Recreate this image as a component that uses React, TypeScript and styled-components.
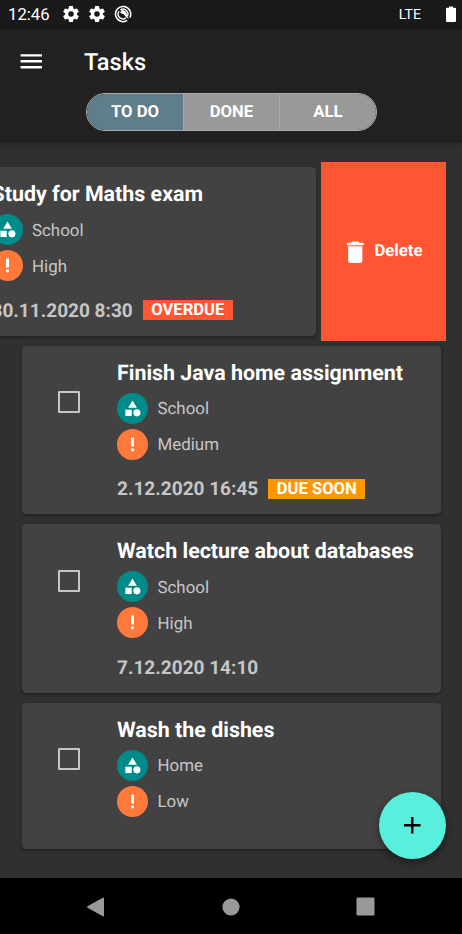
import React from 'react';
import styled, { createGlobalStyle } from 'styled-components';

const GlobalStyle = createGlobalStyle`
  * { box-sizing: border-box; }
  body { margin: 0; background: #000; overflow: hidden; text-rendering: geometricPrecision; }
  button { border: 0; padding: 0; margin: 0; background: none; font: inherit; color: inherit; text-rendering: inherit; }
`;

const Screen = styled.div`
  width: 462px;
  height: 934px;
  display: flex;
  flex-direction: column;
  background: #303030;
  color: #fff;
  font-family: Roboto, 'Liberation Sans', sans-serif;
  overflow: hidden;
  position: relative;
  white-space: nowrap;
`;

const StatusBar = styled.div`
  height: 28.5px;
  flex: none;
  background: #191919;
  display: flex;
  align-items: center;
  padding: 0 6px 0 8px;
`;

const Clock = styled.span`
  width: 54px;
  font-size: 16.7px;
  line-height: 20px;
  padding-top: 3px;
`;

const StatusIcons = styled.div`
  display: flex;
  gap: 8px;
  flex: 1;
`;

const Network = styled.span`
  font-size: 14.2px;
  margin-right: 25px;
  padding-top: 2px;
`;

const AppBar = styled.header`
  height: 114.5px;
  flex: none;
  background: #212121;
  display: flex;
  flex-direction: column;
  box-shadow: 0 2px 5px rgba(0, 0, 0, 0.22);
  position: relative;
`;

const TitleRow = styled.div`
  height: 64.5px;
  display: flex;
  align-items: center;
  padding-left: 17px;
`;

const MenuButton = styled.button`
  width: 67px;
  height: 29px;
`;

const Title = styled.h1`
  margin: 0;
  padding-top: 2px;
  font-size: 23.6px;
  line-height: 28px;
  font-weight: 500;
`;

const Segments = styled.div`
  align-self: center;
  width: 290.5px;
  height: 38px;
  margin-left: 1px;
  display: flex;
  border: 1px solid #a9a9a9;
  border-radius: 19px;
  overflow: hidden;
`;

const Segment = styled.button<{ $active?: boolean }>`
  flex: 1;
  padding-top: 1px;
  background: ${(p) => (p.$active ? '#607d8b' : '#999')};
  font-size: 16.7px;
  font-weight: 700;
  & + & { border-left: 1px solid #a9a9a9; }
`;

const List = styled.main`
  flex: 1;
  min-height: 0;
  padding: 19px 16px 0 17px;
`;

const Row = styled.div<{ $short?: boolean }>`
  height: ${(p) => (p.$short ? 156.5 : 178.5)}px;
  display: flex;
  padding: 5px 0 5px 5px;
`;

const SwipedRow = styled(Row)`
  margin-left: -125.5px;
  padding: 0;
  justify-content: space-between;
`;

const Card = styled.article`
  width: 419px;
  height: 100%;
  flex: none;
  background: #424242;
  border-radius: 4.5px;
  box-shadow: 0 2px 2px rgba(0, 0, 0, 0.2), 0 1px 4px rgba(0, 0, 0, 0.16);
  display: flex;
`;

const SwipedCard = styled.div`
  padding: 5px 0 5px 5px;
`;

const CheckColumn = styled.div`
  width: 95px;
  flex: none;
  padding: 45.5px 0 0 36px;
`;

const Checkbox = styled.div`
  width: 22px;
  height: 22px;
  border: 2px solid #c6c6c6;
  border-radius: 1px;
`;

const Details = styled.div`
  padding-top: 14px;
  min-width: 0;
`;

const TaskName = styled.h2`
  margin: 0 0 3px;
  font-size: 21.4px;
  line-height: 28px;
  font-weight: 700;
`;

const Meta = styled.div`
  height: 35.7px;
  display: flex;
  align-items: center;
  gap: 9.5px;
  font-size: 16.9px;
  color: #c6c6c6;
`;

const MetaLabel = styled.span`
  padding-top: 2px;
`;

const Badge = styled.span<{ $color: string }>`
  width: 31px;
  height: 31px;
  border-radius: 50%;
  background: ${(p) => p.$color};
  display: flex;
  align-items: center;
  justify-content: center;
`;

const DueRow = styled.div`
  height: 24px;
  margin-top: 15px;
  display: flex;
  align-items: center;
  gap: 10px;
  font-size: 19.05px;
  font-weight: 700;
  color: #c6c6c6;
`;

const Tag = styled.span<{ $color: string }>`
  height: 20px;
  line-height: 22px;
  padding: 0 8.5px;
  background: ${(p) => p.$color};
  color: #fff;
  font-size: 16.6px;
`;

const DeleteAction = styled.button`
  width: 125.5px;
  height: 178.5px;
  background: #ff5533;
  display: flex;
  align-items: center;
  justify-content: center;
  gap: 5px;
  padding: 1px 3px 0 0;
  font-size: 16.7px;
  font-weight: 700;
`;

const Fab = styled.button`
  position: absolute;
  left: 379px;
  top: 792px;
  width: 67px;
  height: 67px;
  border-radius: 50%;
  background: #58f0dd;
  box-shadow: 0 4px 6px rgba(0, 0, 0, 0.25), 0 2px 9px rgba(0, 0, 0, 0.2);
  display: flex;
  align-items: center;
  justify-content: center;
`;

const NavBar = styled.nav`
  height: 56px;
  flex: none;
  background: #000;
  display: flex;
  align-items: center;
  justify-content: space-between;
  padding: 1px 87px 0 86px;
`;

const Icon = styled.svg`
  display: block;
  flex: none;
`;

const GearIcon = () => (
  <Icon width="18" height="18" viewBox="1.2 1.2 21.6 21.6" fill="#fff">
    <path d="M19.14 12.94c.04-.3.06-.61.06-.94s-.02-.64-.07-.94l2.03-1.58a.49.49 0 0 0 .12-.61l-1.92-3.32a.49.49 0 0 0-.59-.22l-2.39.96a7 7 0 0 0-1.62-.94l-.36-2.54A.48.48 0 0 0 13.92 2.4h-3.84a.47.47 0 0 0-.47.41l-.36 2.54c-.59.24-1.13.57-1.62.94l-2.39-.96a.47.47 0 0 0-.59.22L2.74 8.87a.48.48 0 0 0 .12.61l2.03 1.58c-.05.3-.09.63-.09.94s.02.64.07.94l-2.03 1.58a.49.49 0 0 0-.12.61l1.92 3.32c.12.22.37.29.59.22l2.39-.96c.5.38 1.03.7 1.62.94l.36 2.54c.05.24.24.41.48.41h3.84c.24 0 .44-.17.47-.41l.36-2.54c.59-.24 1.13-.56 1.62-.94l2.39.96c.22.08.47 0 .59-.22l1.92-3.32a.47.47 0 0 0-.12-.61zM12 15.3a3.3 3.3 0 1 1 0-6.6 3.3 3.3 0 0 1 0 6.6z" />
  </Icon>
);

const DialIcon = () => (
  <Icon width="18" height="18" viewBox="0 0 18 18" fill="none" stroke="#fff">
    <path d="M13.2 15.4A7.6 7.6 0 1 1 15.8 12.6" strokeWidth="1.5" />
    <path d="M12 12.9A4.9 4.9 0 0 1 5.1 6.1" strokeWidth="1.4" />
    <path d="M6.4 4.9A4.9 4.9 0 0 1 13.4 11.2" strokeWidth="1.4" />
    <path d="M7.2 5.4C10.500 4.400 13.100 7 13 10.500L14.9 14L12 12L9.400 8.900L6.3 8z" fill="#fff" stroke="none" />
  </Icon>
);

const BatteryIcon = () => (
  <Icon width="10" height="17" viewBox="0 0 10 17" fill="#fff">
    <path d="M3 .5h4v1.300h2q1 0 1 1V15q0 1-1 1H1q-1 0-1-1V2.800q0-1 1-1h2z" />
  </Icon>
);

const MenuIcon = () => (
  <Icon width="28.5" height="28.5" viewBox="0 0 24 24" fill="#fff">
    <path d="M3 18h18v-2H3v2zm0-5h18v-2H3v2zm0-7v2h18V6H3z" />
  </Icon>
);

const ShapesIcon = () => (
  <Icon width="17" height="17" viewBox="1.3 1.3 21.4 21.4" fill="#fff">
    <path d="M12 2l-5.5 9h11z" />
    <circle cx="17.5" cy="17.5" r="4.5" />
    <path d="M3 13.5h8v8H3z" />
  </Icon>
);

const AlertIcon = () => (
  <Icon width="5" height="15" viewBox="0 0 5 15" fill="#fff">
    <path d="M1 .5h3v9H1z" />
    <circle cx="2.5" cy="12.8" r="1.6" />
  </Icon>
);

const TrashIcon = () => (
  <Icon width="28.5" height="28.5" viewBox="0 0 24 24" fill="#fff">
    <path d="M6 19c0 1.1.9 2 2 2h8c1.1 0 2-.9 2-2V7H6v12zM19 4h-3.5l-1-1h-5l-1 1H5v2h14V4z" />
  </Icon>
);

const PlusIcon = () => (
  <Icon width="28.5" height="28.5" viewBox="0 0 24 24" fill="#000">
    <path d="M19 13h-6v6h-2v-6H5v-2h6V5h2v6h6z" />
  </Icon>
);

type Task = {
  name: string;
  category: string;
  priority: string;
  due?: string;
  tag?: { label: string; color: string };
};

const swiped: Task = {
  name: 'Study for Maths exam',
  category: 'School',
  priority: 'High',
  due: '30.11.2020 8:30',
  tag: { label: 'OVERDUE', color: '#ff5533' },
};

const tasks: Task[] = [
  {
    name: 'Finish Java home assignment',
    category: 'School',
    priority: 'Medium',
    due: '2.12.2020 16:45',
    tag: { label: 'DUE SOON', color: '#ff9800' },
  },
  { name: 'Watch lecture about databases', category: 'School', priority: 'High', due: '7.12.2020 14:10' },
  { name: 'Wash the dishes', category: 'Home', priority: 'Low' },
];

const TaskCard = ({ task }: { task: Task }) => (
  <Card>
    <CheckColumn>
      <Checkbox role="checkbox" aria-checked={false} />
    </CheckColumn>
    <Details>
      <TaskName>{task.name}</TaskName>
      <Meta>
        <Badge $color="#008b8b"><ShapesIcon /></Badge>
        <MetaLabel>{task.category}</MetaLabel>
      </Meta>
      <Meta>
        <Badge $color="#ff793b"><AlertIcon /></Badge>
        <MetaLabel>{task.priority}</MetaLabel>
      </Meta>
      {task.due && (
        <DueRow>
          {task.due}
          {task.tag && <Tag $color={task.tag.color}>{task.tag.label}</Tag>}
        </DueRow>
      )}
    </Details>
  </Card>
);

export default function App() {
  return (
    <>
      <GlobalStyle />
      <Screen>
        <StatusBar>
          <Clock>12:46</Clock>
          <StatusIcons>
            <GearIcon />
            <GearIcon />
            <DialIcon />
          </StatusIcons>
          <Network>LTE</Network>
          <BatteryIcon />
        </StatusBar>
        <AppBar>
          <TitleRow>
            <MenuButton aria-label="Menu"><MenuIcon /></MenuButton>
            <Title>Tasks</Title>
          </TitleRow>
          <Segments>
            <Segment $active>TO DO</Segment>
            <Segment>DONE</Segment>
            <Segment>ALL</Segment>
          </Segments>
        </AppBar>
        <List>
          <SwipedRow>
            <SwipedCard><TaskCard task={swiped} /></SwipedCard>
            <DeleteAction><TrashIcon />Delete</DeleteAction>
          </SwipedRow>
          {tasks.map((task) => (
            <Row key={task.name} $short={!task.due}>
              <TaskCard task={task} />
            </Row>
          ))}
        </List>
        <Fab aria-label="Add task"><PlusIcon /></Fab>
        <NavBar>
          <Icon width="19" height="20" viewBox="0 0 19 20" fill="#999">
            <path d="M1.5 9.2L16.8.7q1.2-.5 1.2.8v17q0 1.3-1.2.8L1.5 10.8q-1-.8 0-1.6z" />
          </Icon>
          <Icon width="18" height="18" viewBox="0 0 18 18" fill="#999">
            <circle cx="9" cy="9" r="8.6" />
          </Icon>
          <Icon width="19" height="19" viewBox="0 0 19 19" fill="#999">
            <rect x=".5" y=".5" width="18" height="18" rx="1.2" />
          </Icon>
        </NavBar>
      </Screen>
    </>
  );
}
